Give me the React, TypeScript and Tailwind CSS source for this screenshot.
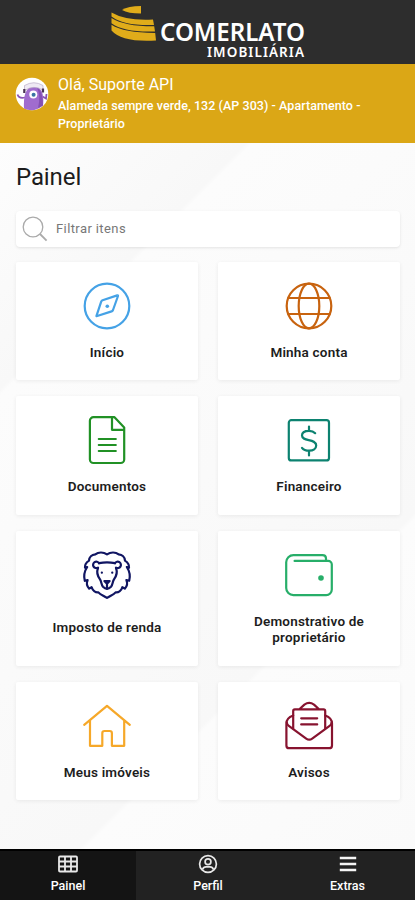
import type { ReactNode } from "react";

type PanelItem = {
  label: string;
  color: string;
  icon: ReactNode;
  labelClass?: string;
};

const panelItems: PanelItem[] = [
  {
    label: "Início",
    color: "text-[#45a2e6]",
    icon: (
      <>
        <circle cx="24" cy="24" r="22.3" />
        <path d="M34.2 13.4 19.6 18.2Q18.6 18.6 18.2 19.6L13.4 34.2 28.6 29.4Q29.6 29 30 28L35 14Q35.2 13.1 34.2 13.4Z" />
        <circle cx="24.3" cy="24.2" r="1.8" fill="currentColor" stroke="none" />
      </>
    ),
  },
  {
    label: "Minha conta",
    color: "text-[#c8630f]",
    icon: (
      <>
        <circle cx="24" cy="24" r="22.3" />
        <ellipse cx="24" cy="24" rx="10.3" ry="22.3" />
        <path d="M3.4 16h41.2M3.4 32h41.2" />
      </>
    ),
  },
  {
    label: "Documentos",
    color: "text-[#219125]",
    icon: (
      <>
        <path d="M10.5 1.2H31.5L41.2 11.5V43.4A3.6 3.6 0 0 1 37.6 47H10.5A3.6 3.6 0 0 1 6.9 43.4V4.8A3.6 3.6 0 0 1 10.5 1.2Z" />
        <path d="M29 1.5V13.8H41M15.8 23h17M15.8 29h17M15.8 35h17" />
      </>
    ),
  },
  {
    label: "Financeiro",
    color: "text-[#0c8270]",
    icon: (
      <>
        <rect x="3.8" y="4.2" width="40.2" height="40.2" rx="2.5" />
        <path d="M24 10.5v4.2M24 34.6v4.8M30.2 17.2Q28 14.8 24 14.8C19.6 14.8 17 16.8 17 19.6 17 26 31.2 22.2 31.2 29.6 31.2 32.8 28.2 34.7 24.2 34.7 21 34.7 18.4 33.8 17 31.8" />
      </>
    ),
  },
  {
    label: "Imposto de renda",
    color: "text-[#101562]",
    labelClass: "pt-1.5",
    icon: (
      <>
        <path d="M24 3.4C20.5 1 15.5.8 12.3 3.4 8.8 3.6 6.2 6.2 6 9.6 3.4 11.3 1.7 13.8 2 16.6L4.2 16C1.4 20.2.6 25.2 1.8 29.8L4.6 29C3.4 32 4 35.4 6.2 37.6L8.6 36.2C9.6 39.4 12.4 41.8 15.4 41.4 17.4 43.8 20.8 44.6 24 46.8 27.2 44.6 30.6 43.8 32.6 41.4 35.6 41.8 38.4 39.4 39.4 36.2L41.8 37.6C44 35.4 44.6 32 43.4 29L46.2 29.8C47.4 25.2 46.6 20.2 43.8 16L46 16.6C46.3 13.8 44.6 11.3 42 9.6 41.8 6.2 39.2 3.6 35.7 3.4 32.5.8 27.5 1 24 3.4Z" />
        <path d="M16 12.2Q24 10.6 32 12.2M15 17.2C13.2 21.6 14.8 25.4 17 28.4 18.6 30.8 18.2 33.6 20 35.8Q22 37.8 24 37.8 26 37.8 28 35.8C29.8 33.6 29.4 30.8 31 28.4 33.2 25.4 34.8 21.6 33 17.2" />
        <path d="M15 16.6A3.2 3.2 0 1 1 16 12.2M33 16.6A3.2 3.2 0 1 0 32 12.2M21.4 30h5.2L24 32.8ZM24 32.8v4.8" />
        <path d="M18.8 21.7h.1M29.2 21.7h.1" />
      </>
    ),
  },
  {
    label: "Demonstrativo de proprietário",
    color: "text-[#27ae69]",
    icon: (
      <>
        <path d="M9.6 9.9H43.2A3.6 3.6 0 0 1 46.8 13.5V38.6A5.6 5.6 0 0 1 41.2 44.2H8.4A7.2 7.2 0 0 1 1.2 37V11.3A7.2 7.2 0 0 1 8.4 4.1H37.4Q41 4.1 41 7.4V9.2" />
        <circle cx="36" cy="27" r="2.8" fill="currentColor" stroke="none" />
      </>
    ),
  },
  {
    label: "Meus imóveis",
    color: "text-[#f6a829]",
    icon: (
      <path d="M1.2 22.8 24 3.8 46.8 22.8M7 18.6V43.8H19.3V31.2Q19.3 29 21.5 29H26.7Q28.9 29 28.9 31.2V43.8H41.2V18.6" />
    ),
  },
  {
    label: "Avisos",
    color: "text-[#87132f]",
    icon: (
      <>
        <path d="M8.2 13.5Q1.4 16 1.4 21.5V43.4A2.8 2.8 0 0 0 4.2 46.2H44.2A2.8 2.8 0 0 0 47 43.4V21.5Q47 16 40.2 13.5" />
        <path d="M1.8 20.5Q2 22.6 3.8 23.8L21.2 36.6Q24.2 38.8 27.2 36.6L44.6 23.8Q46.4 22.6 46.6 20.5" />
        <path d="M8.2 26.4V9A1.6 1.6 0 0 1 9.8 7.4H38.6A1.6 1.6 0 0 1 40.2 9V26.4M14.6 7 19.4 2.6Q24.2-.8 29 2.6L33.8 7M16.2 16.3h16M16.2 22.4h16" />
      </>
    ),
  },
];

export default function App() {
  return (
    <div className="flex h-[900px] w-full flex-col overflow-hidden bg-[#fafafa] font-['Roboto',sans-serif]">
      <header className="flex h-16 shrink-0 justify-center bg-[#2d2d2d]">
        <Logo />
      </header>

      <UserBar />

      <main className="flex-1 bg-[linear-gradient(135deg,#fdfdfd_0%,#f8f8f8_22%,#fcfcfc_22.5%,#fafafa_48%,#f8f8f8_70%,#fcfcfc_70.5%,#fafafa_100%)] pr-[15px] pl-4">
        <h1 className="pt-[18px] text-[24px] leading-8 tracking-[-0.1px] text-[#1c1c1c]">Painel</h1>

        <label className="mt-[18px] flex h-9 items-center rounded bg-white pl-[5px] shadow-[0_1px_3px_rgba(0,0,0,0.1)]">
          <svg className="size-7 shrink-0" viewBox="0 0 28 28" fill="none" stroke="#aaa" strokeWidth="1.3">
            <circle cx="12" cy="12" r="9.8" />
            <path d="m19 19 6.6 6.6" strokeWidth="1.8" />
          </svg>
          <input
            className="ml-[7px] w-full bg-transparent text-[13px] tracking-[0.4px] outline-none placeholder:text-[#777]"
            placeholder="Filtrar itens"
          />
        </label>

        <div className="mt-[15px] grid grid-cols-2 grid-rows-[118px_119px_135px_118px] gap-x-5 gap-y-4">
          {panelItems.map((item) => (
            <PanelCard key={item.label} item={item} />
          ))}
        </div>
      </main>

      <TabBar />
    </div>
  );
}

function Logo() {
  return (
    <svg className="h-16 w-[208px]" viewBox="104 0 208 64">
      <g fill="#e0ac1a">
        <path d="M122 10Q128 6 141 6V13.5Q128 13.5 122 10Z" />
        <path d="M111.5 12.5Q126 21 153 19.5L154 25Q124 26 111.5 16.5Z" />
        <path d="M111.5 18Q125 26.5 154.2 26.3L155 31.5Q124 32.5 111.5 23.2Z" />
        <path d="M111.5 24.8Q124 33 155.2 32.9L156 40.5Q122 42.5 111.5 30.5Z" />
      </g>
      <g fill="#fff" fontFamily="Noto Sans, sans-serif" fontWeight="600">
        <text x="160" y="41" fontSize="25" textLength="145" lengthAdjust="spacingAndGlyphs">
          COMERLATO
        </text>
        <text x="207" y="56.5" fontSize="13.5" textLength="97">
          IMOBILIÁRIA
        </text>
      </g>
    </svg>
  );
}

function UserBar() {
  return (
    <section className="flex h-[79px] shrink-0 bg-[#dba716] pt-2.5 pl-[15px] text-white">
      <Avatar />
      <div className="ml-[9px]">
        <p className="text-[16px] leading-[22px]">Olá, Suporte API</p>
        <p className="mt-px w-[320px] text-[12.5px] leading-[18px] font-medium tracking-[0.06px]">
          Alameda sempre verde, 132 (AP 303) - Apartamento - Proprietário
        </p>
      </div>
    </section>
  );
}

function Avatar() {
  return (
    <svg className="mt-[3px] h-[34px] w-[34px] shrink-0" viewBox="0 0 34 34">
      <circle cx="17" cy="17" r="16.3" fill="#fff" />
      <path d="M10 20.5Q4 22 2.5 17.5M27.5 19.5 31 21.5 31.5 17" fill="none" stroke="#8954b5" strokeWidth="1.8" />
      <path d="M9 31.5Q7.8 9.5 19 9.5 30 10 28 28.5 19 36 9 31.5Z" fill="#a06cce" />
      <path d="M22 10.5Q28 14 28 28.5L23 31Q26 19 22 10.5Z" fill="#8450b3" />
      <path d="M9.5 13.5V8.5Q19 3 28 8.5V13Q19 7.5 9.5 13.5Z" fill="#efeaf4" stroke="#b8aac7" strokeWidth=".7" />
      <path d="M9.3 12v4M28 11.5v4" stroke="#493252" strokeWidth="2.2" />
      <circle cx="18.3" cy="17.6" r="4" fill="#fff" />
      <circle cx="18.6" cy="17.7" r="2" fill="#3974a3" />
    </svg>
  );
}

function PanelCard({ item }: { item: PanelItem }) {
  return (
    <a
      href="#"
      className="flex flex-col items-center rounded-[2px] bg-white px-6 pt-5 shadow-[0_1px_4px_rgba(0,0,0,0.07)]"
    >
      <svg
        className={`size-12 shrink-0 overflow-visible ${item.color}`}
        viewBox="0 0 48 48"
        fill="none"
        stroke="currentColor"
        strokeWidth="2.2"
        strokeLinecap="round"
        strokeLinejoin="round"
      >
        {item.icon}
      </svg>
      <div className={item.labelClass}>
        <p className="mt-3.5 text-center text-[13.5px] leading-4 font-semibold tracking-[0.2px] text-[#1d1d1d]">
          {item.label}
        </p>
      </div>
    </a>
  );
}

function TabBar() {
  return (
    <nav className="flex h-[51px] shrink-0 border-t-2 border-black bg-[#222] text-[12.5px] font-medium text-white">
      <a href="#" className="flex w-[136px] flex-col items-center bg-[#141414] pt-[3px]">
        <svg className="size-5" viewBox="0 0 20 20" fill="none" stroke="#e8e8e8" strokeWidth="1.8">
          <rect x="1" y="2.5" width="18" height="15" rx="1" />
          <path d="M1 7.5h18M1 12.5h18M7 2.5v15M13 2.5v15" />
        </svg>
        <span className="mt-1 leading-4">Painel</span>
      </a>
      <a href="#" className="flex w-36 flex-col items-center pt-[3px]">
        <svg className="size-5" viewBox="0 0 20 20" fill="none" stroke="#e8e8e8" strokeWidth="1.7">
          <circle cx="10" cy="10" r="8.4" />
          <circle cx="10" cy="7.8" r="2.9" />
          <path d="M4.5 15.5Q5.5 12.8 8 12.8H12Q14.5 12.8 15.5 15.5" />
        </svg>
        <span className="mt-1 leading-4">Perfil</span>
      </a>
      <a href="#" className="flex flex-1 flex-col items-center pt-[3px]">
        <svg className="size-5" viewBox="0 0 20 20" stroke="#f5f5f5" strokeWidth="2.6">
          <path d="M1.8 4h16.4M1.8 10h16.4M1.8 16h16.4" />
        </svg>
        <span className="mt-1 leading-4">Extras</span>
      </a>
    </nav>
  );
}
